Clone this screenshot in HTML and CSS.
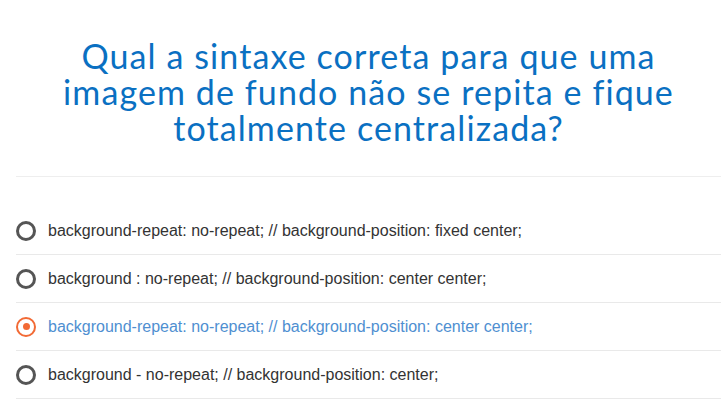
FILE: index.html
```html
<!DOCTYPE html>
<html lang="pt-BR">
<head>
<meta charset="utf-8">
<title>Quiz</title>
<link rel="stylesheet" href="styles.css">
</head>
<body>
<div class="quiz">
  <h1 class="question">Qual a sintaxe correta para que uma<br>imagem de fundo não se repita e fique<br>totalmente centralizada?</h1>
  <ul class="options">
    <li class="option"><span class="radio"></span><span class="label">background-repeat: no-repeat; // background-position: fixed center;</span></li>
    <li class="option"><span class="radio"></span><span class="label">background : no-repeat; // background-position: center center;</span></li>
    <li class="option selected"><span class="radio"></span><span class="label">background-repeat: no-repeat; // background-position: center center;</span></li>
    <li class="option"><span class="radio"></span><span class="label">background - no-repeat; // background-position: center;</span></li>
  </ul>
</div>
</body>
</html>
```
FILE: styles.css
```css
html, body {
  margin: 0;
  padding: 0;
  background: #ffffff;
}
.quiz {
  padding-left: 16px;
}
.question {
  margin: 0;
  padding: 38px 0 30px;
  font-family: "Lato", "Noto Sans", sans-serif;
  font-weight: 400;
  font-size: 34px;
  letter-spacing: 1.1px;
  line-height: 36px;
  color: #0a70c2;
  text-align: center;
  border-bottom: 1px solid #eeeeee;
}
.options {
  list-style: none;
  margin: 30px 0 0;
  padding: 0;
}
.option {
  display: flex;
  align-items: center;
  gap: 12px;
  height: 47px;
  border-bottom: 1px solid #e9e9e9;
  font-family: "Liberation Sans", Arial, sans-serif;
  font-size: 16px;
  color: #333333;
}
.radio {
  box-sizing: border-box;
  width: 20px;
  height: 20px;
  border: 3px solid #555555;
  border-radius: 50%;
  flex: none;
  position: relative;
}
.selected .radio {
  border: 2.5px solid #f26a35;
}
.selected .radio::after {
  content: "";
  position: absolute;
  left: 50%;
  top: 50%;
  width: 7px;
  height: 7px;
  margin: -3.5px 0 0 -3.5px;
  border-radius: 50%;
  background: #f26a35;
}
.selected .label {
  color: #4f8fd1;
}
```
